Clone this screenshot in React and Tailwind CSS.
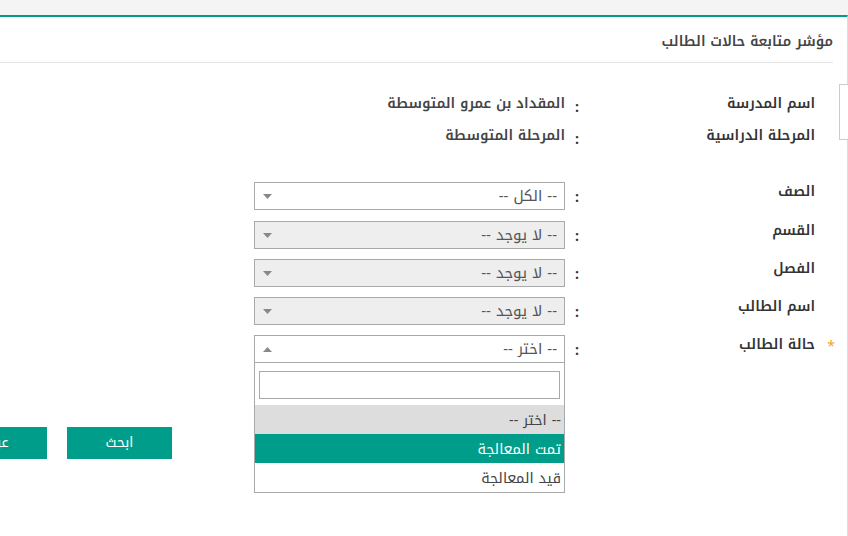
import React, {useState} from 'react';

const TEAL = 'bg-[#009e8a]';

function Caret({up}) {
    return (
        <svg width="9" height="5" viewBox="0 0 9 5" className="shrink-0">
            {up
                ? <path d="M0 5 L4.5 0 L9 5 Z" fill="#888"/>
                : <path d="M0 0 L9 0 L4.5 5 Z" fill="#888"/>}
        </svg>
    );
}

function InfoRow({label, value}) {
    return (
        <div className="flex items-start h-[32px] leading-[20px]">
            <div className="w-[32px] shrink-0"/>
            <div className="w-[226px] shrink-0 text-[14px] font-semibold text-[#333]">{label}</div>
            <div className="w-[24px] shrink-0 text-center text-[14px] font-bold text-[#333] pt-[4px]">:</div>
            <div className="text-[14px] font-semibold text-[#444]">{value}</div>
        </div>
    );
}

function SelectBox({text, disabled, open}) {
    return (
        <div
            className={`w-[311px] h-[28px] border border-[#aaa] flex items-center justify-between pr-[7px] pl-[8px] ${disabled ? 'bg-[#eee]' : 'bg-white'}`}>
            <span className="text-[15px] leading-[20px] text-[#555] tracking-[0.3px]">{text}</span>
            <Caret up={open}/>
        </div>
    );
}

function FieldRow({label, children, required, first}) {
    return (
        <div className={`flex items-start leading-[20px] ${first ? 'h-[39px]' : 'h-[38px]'}`}>
            <div className="w-[32px] shrink-0 flex justify-center pt-[2px] text-[14px] text-[#f5a623]">
                {required ? '*' : ''}
            </div>
            <div className="w-[226px] shrink-0 text-[14px] font-semibold text-[#333]">{label}</div>
            <div className="w-[24px] shrink-0 h-[28px] flex items-center justify-center text-[14px] font-bold text-[#333] pt-[3px]">:</div>
            <div className="relative">{children}</div>
        </div>
    );
}

export default function App() {
    const [selected] = useState(1);
    const options = ['-- اختر --', 'تمت المعالجة', 'قيد المعالجة'];

    return (
        <div dir="rtl" className="w-[848px] h-[536px] bg-white overflow-hidden relative"
             style={{fontFamily: '"Noto Kufi Arabic", "DejaVu Sans", sans-serif'}}>
            <div className="h-[15px] bg-[#f4f4f4]"/>
            <div className="border-t-2 border-[#009e8a] border-r border-r-[#ddd] h-[521px]">
                <div className="mr-[14px] h-[46px] border-b border-[#e5e5e5] flex items-center pt-[4px]">
                    <h1 className="text-[14px] leading-[20px] font-semibold text-[#444]">مؤشر متابعة حالات الطالب</h1>
                </div>

                <div className="pt-[31px]">
                    <InfoRow label="اسم المدرسة" value="المقداد بن عمرو المتوسطة"/>
                    <InfoRow label="المرحلة الدراسية" value="المرحلة المتوسطة"/>
                </div>

                <div className="pt-[24px]">
                    <FieldRow label="الصف" first>
                        <SelectBox text="-- الكل --"/>
                    </FieldRow>
                    <FieldRow label="القسم">
                        <SelectBox text="-- لا يوجد --" disabled/>
                    </FieldRow>
                    <FieldRow label="الفصل">
                        <SelectBox text="-- لا يوجد --" disabled/>
                    </FieldRow>
                    <FieldRow label="اسم الطالب">
                        <SelectBox text="-- لا يوجد --" disabled/>
                    </FieldRow>
                    <FieldRow label="حالة الطالب" required>
                        <SelectBox text="-- اختر --" open/>
                        {/* open dropdown list */}
                        <div className="absolute top-[28px] right-0 w-[311px] h-[130px] bg-white border border-t-0 border-[#aaa] z-10">
                            <div className="px-[4px] pt-[8px] pb-[6px]">
                                <div className="h-[28px] border border-[#aaa] bg-white"/>
                            </div>
                            {options.map((o, i) => (
                                <div key={o}
                                     className={`h-[29px] flex items-center pr-[3px] text-[14.5px] leading-[20px] ${i === selected ? `${TEAL} text-white` : i === 0 ? 'bg-[#ddd] text-[#444]' : 'bg-white text-[#444]'}`}>
                                    {o}
                                </div>
                            ))}
                        </div>
                    </FieldRow>
                </div>

                <div className="flex justify-end gap-[20px] -ml-[58px] mt-[54px]">
                    <button className={`w-[105px] h-[32px] ${TEAL} text-white text-[14px] leading-[20px]`}>ابحث</button>
                    <button className={`w-[105px] h-[32px] ${TEAL} text-white text-[14px] leading-[20px]`}>عرض</button>
                </div>
            </div>

            {/* collapsed side tab */}
            <div className="absolute top-[84px] left-[839px] w-[20px] h-[56px] border border-[#ccc] bg-white"/>
        </div>
    );
}
